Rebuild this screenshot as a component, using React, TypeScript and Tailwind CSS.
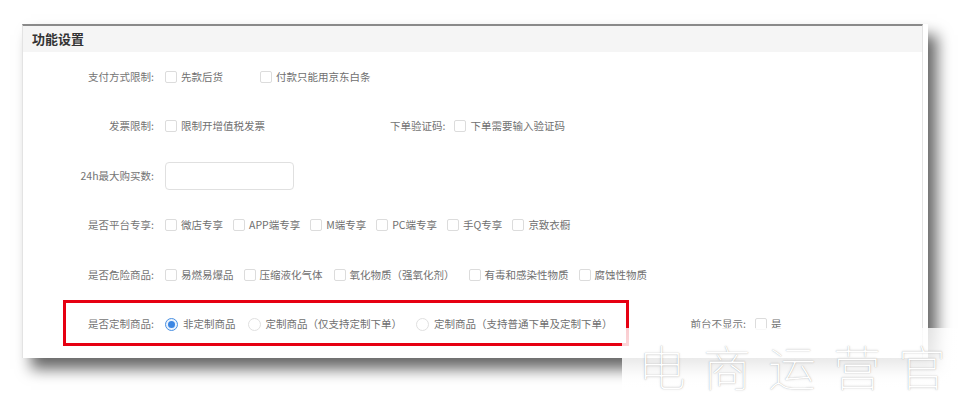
import React from "react";

const font = { fontFamily: '"Noto Sans CJK SC", "Noto Sans", sans-serif' };

function Box() {
  return <span className="inline-block w-[12px] h-[12px] border border-[#dcdcdc] rounded-[2px] bg-white shrink-0" />;
}

function Check({ text, className = "" }: { text: string; className?: string }) {
  return (
    <span className={`flex items-center ${className}`}>
      <Box />
      <span className="ml-[4px] text-[#707070] whitespace-nowrap">{text}</span>
    </span>
  );
}

function Radio({ text, checked = false, className = "" }: { text: string; checked?: boolean; className?: string }) {
  return (
    <span className={`flex items-center ${className}`}>
      {checked ? (
        <span className="flex items-center justify-center w-[13px] h-[13px] rounded-full border border-[#4a90e2] bg-[#eaf3fd] shrink-0">
          <span className="w-[7px] h-[7px] rounded-full bg-[#3b86e3]" />
        </span>
      ) : (
        <span className="inline-block w-[13px] h-[13px] rounded-full border border-[#e0e0e0] bg-white shrink-0" />
      )}
      <span className="ml-[5px] text-[#707070] whitespace-nowrap">{text}</span>
    </span>
  );
}

function Row({ label, children, className = "" }: { label: string; children: React.ReactNode; className?: string }) {
  return (
    <div className={`flex items-center h-[49.5px] ${className}`}>
      <div className="w-[131px] text-right text-[#747474] whitespace-nowrap">{label}</div>
      <div className="ml-[11px] flex items-center">{children}</div>
    </div>
  );
}

export default function App() {
  return (
    <div className="relative w-[970px] h-[401px] bg-white overflow-hidden text-[10.5px] leading-none" style={font}>
      <div className="absolute left-[22px] top-[24px] w-[906px] h-[334px] bg-white pr-[5px] shadow-[9px_11px_14px_rgba(0,0,0,0.6)]">
        <div className="h-full border-t-2 border-[#8a8a8a] border-x border-x-[#e3e3e3]">
          <div className="h-[26px] bg-[#f5f5f5] flex items-center pl-[9px] pb-[2px] text-[13px] font-bold text-[#333]">功能设置</div>
          <Row label="支付方式限制:">
            <Check text="先款后货" />
            <Check text="付款只能用京东白条" className="ml-[37px]" />
          </Row>
          <Row label="发票限制:">
            <Check text="限制开增值税发票" />
            <span className="ml-[125px] text-[#747474] whitespace-nowrap">下单验证码:</span>
            <Check text="下单需要输入验证码" className="ml-[9px]" />
          </Row>
          <Row label="24h最大购买数:">
            <div className="w-[129px] h-[28px] border border-[#e0e0e0] rounded-[4px] bg-white" />
          </Row>
          <Row label="是否平台专享:">
            <Check text="微店专享" />
            <Check text="APP端专享" className="ml-[10px]" />
            <Check text="M端专享" className="ml-[10px]" />
            <Check text="PC端专享" className="ml-[10px]" />
            <Check text="手Q专享" className="ml-[10px]" />
            <Check text="京致衣橱" className="ml-[10px]" />
          </Row>
          <Row label="是否危险商品:">
            <Check text="易燃易爆品" />
            <Check text="压缩液化气体" className="ml-[10px]" />
            <Check text="氧化物质（强氧化剂）" className="ml-[11px]" />
            <Check text="有毒和感染性物质" className="ml-[14px]" />
            <Check text="腐蚀性物质" className="ml-[10px]" />
          </Row>
          <div className="relative">
            <Row label="是否定制商品:">
              <Radio text="非定制商品" checked />
              <Radio text="定制商品（仅支持定制下单）" className="ml-[12px]" />
              <Radio text="定制商品（支持普通下单及定制下单）" className="ml-[14px]" />
              <span className="ml-[78px] text-[#747474] whitespace-nowrap">前台不显示:</span>
              <Check text="是" className="ml-[9px]" />
            </Row>
            <div className="absolute left-[40px] top-[0px] w-[566px] h-[46px] border-[3px] border-[#e60012]" />
          </div>
        </div>
      </div>
      <div className="absolute left-[622px] top-[328px] w-[348px] h-[73px] bg-gradient-to-b from-[rgba(255,255,255,0.8)] to-[rgba(255,255,255,0.94)] flex items-center pl-[16px]">
        <span
          className="text-[48px] font-thin tracking-[17px] text-white whitespace-nowrap leading-none"
          style={{ textShadow: "0 0 1px rgba(0,0,0,0.3), 0 0 3px rgba(0,0,0,0.12)" }}
        >
          电商运营官
        </span>
      </div>
    </div>
  );
}
